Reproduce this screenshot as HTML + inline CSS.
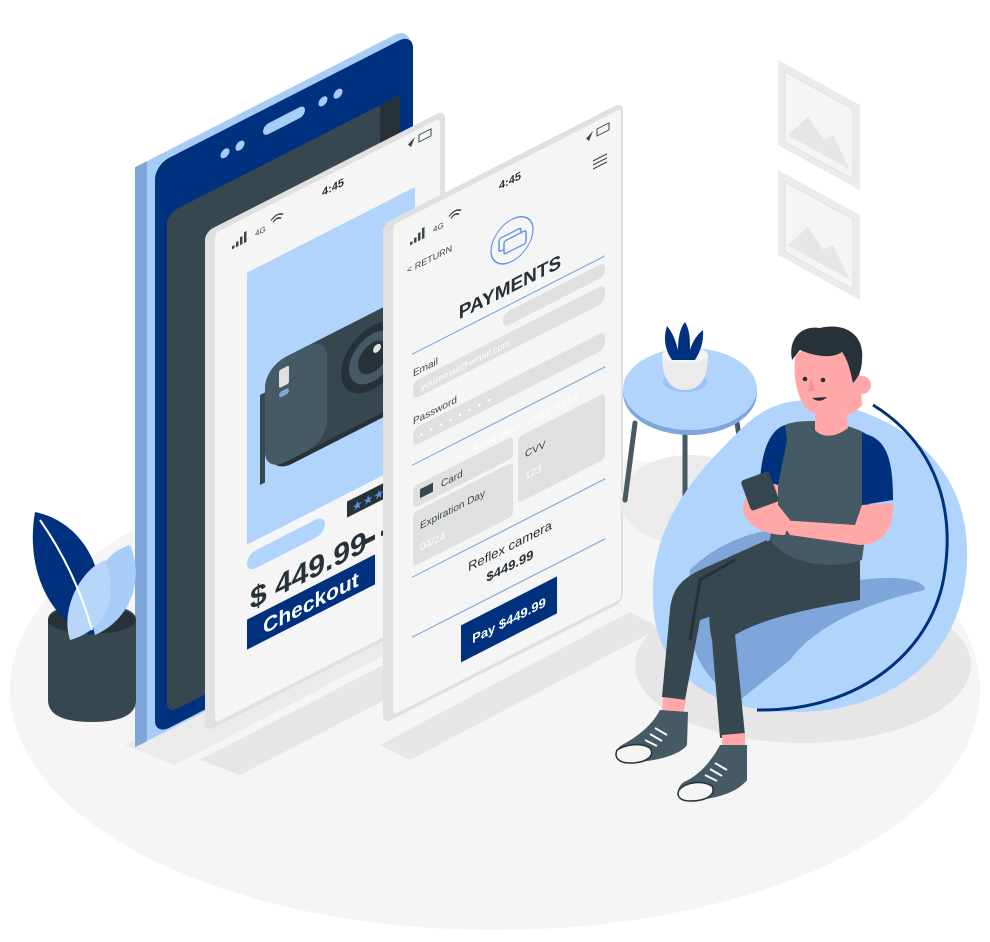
<!DOCTYPE html>
<html><head><meta charset="utf-8"><style>
html,body{margin:0;padding:0;background:#fff;}
svg{display:block;}
text{font-family:"Liberation Sans",sans-serif;}
</style></head><body>
<svg width="990" height="942" viewBox="0 0 990 942" xmlns="http://www.w3.org/2000/svg">
<ellipse cx="495" cy="690" rx="485" ry="240" fill="#f5f5f5"/>
<g transform="matrix(1,0.55,0,1,778,60)">
 <rect x="0" y="0" width="82" height="85" fill="#ebebeb"/>
 <rect x="7" y="8" width="68" height="70" fill="#f5f5f5" stroke="#e0e0e0"/>
 <path d="M10 70 L30 40 L45 55 L55 45 L72 70Z" fill="#e6e6e6"/>
 <rect x="0" y="110" width="82" height="85" fill="#ebebeb"/>
 <rect x="7" y="118" width="68" height="70" fill="#f5f5f5" stroke="#e0e0e0"/>
 <path d="M10 180 L30 150 L45 165 L55 155 L72 180Z" fill="#e6e6e6"/>
</g>
<polygon points="125,745 420,590 470,610 175,765" fill="#ebebeb"/>
<polygon points="200,760 460,625 500,640 240,775" fill="#e6e6e6"/>
<polygon points="380,745 630,612 660,628 410,760" fill="#e6e6e6"/>
<g transform="matrix(1,-0.51,0,1,155,165)">
 <rect x="-20" y="-8" width="275" height="580" rx="16" fill="#a8ccf8"/>
 <rect x="-20" y="-8" width="12" height="580" fill="#7fa6da"/>
 <rect x="0" y="0" width="258" height="570" rx="14" fill="#00317f"/>
 <rect x="12" y="55" width="233" height="500" rx="10" fill="#37474f"/>
 <rect x="225" y="55" width="20" height="500" fill="#263238"/>
 <rect x="108" y="16" width="42" height="11" rx="5.5" fill="#a8ccf8"/>
 <circle cx="70" cy="24" r="4.5" fill="#a8ccf8"/><circle cx="85" cy="24" r="4.5" fill="#a8ccf8"/>
 <circle cx="168" cy="22" r="4.5" fill="#a8ccf8"/><circle cx="183" cy="22" r="4.5" fill="#a8ccf8"/>
</g>
<path d="M48 620 Q48 605 92 605 Q136 605 136 620 L136 700 Q136 722 92 722 Q48 722 48 700Z" fill="#37474f"/>
<ellipse cx="92" cy="620" rx="44" ry="14" fill="#263238"/>
<path d="M90 635 C50 620 25 570 35 512 C75 520 110 560 100 630Z" fill="#00317f"/>
<path d="M95 635 C85 600 95 555 130 545 C145 580 130 620 95 635Z" fill="#a8ccf8"/>
<path d="M70 640 C60 610 80 570 105 560 C120 600 105 630 70 640Z" fill="#b8d6fa"/>
<path d="M40 520 Q75 570 92 630" stroke="#fff" stroke-width="2" fill="none"/>
<g transform="matrix(1,-0.51,0,1,215,233)">
 <rect x="-10" y="-6" width="240" height="500" rx="8" fill="#e0e0e0"/>
 <rect x="0" y="0" width="225" height="490" rx="4" fill="#f5f5f5"/>
 <text x="118" y="18" font-size="11" font-weight="bold" fill="#263238" text-anchor="middle">4:45</text>
 <rect x="17" y="22" width="2.5" height="3" fill="#37474f"/><rect x="21" y="20" width="2.5" height="5" fill="#37474f"/><rect x="25" y="17" width="2.5" height="8" fill="#37474f"/><rect x="29" y="14" width="2.5" height="11" fill="#37474f"/>
 <text x="40" y="24" font-size="8" fill="#37474f">4G</text>
 <path d="M56 16 Q62 11 68 16 M58 19 Q62 15 66 19" stroke="#37474f" stroke-width="1.5" fill="none"/>
 <path d="M193 10 L200 6 L196 14Z" fill="#37474f"/>
 <rect x="204" y="6" width="12" height="7" fill="none" stroke="#37474f"/>
 <rect x="32" y="56" width="168" height="272" fill="#b0d4fc"/>
 <rect x="55" y="170" width="150" height="100" rx="22" fill="#263238"/>
 <rect x="50" y="160" width="150" height="105" rx="22" fill="#37474f"/>
 <rect x="50" y="160" width="62" height="105" rx="20" fill="#455a64"/>
 <circle cx="158" cy="205" r="32" fill="#263238"/>
 <circle cx="158" cy="205" r="24" fill="#455a64"/>
 <circle cx="158" cy="205" r="15" fill="#263238"/>
 <circle cx="162" cy="198" r="4" fill="#e0e0e0"/>
 <rect x="64" y="170" width="10" height="18" rx="2" fill="#e0e0e0"/>
 <rect x="64" y="192" width="10" height="6" rx="3" fill="#7fa6da"/>
 <rect x="45" y="185" width="5" height="90" fill="#37474f"/>
 <rect x="32" y="338" width="78" height="18" rx="9" fill="#b0d4fc"/>
 <rect x="132" y="336" width="70" height="16" fill="#263238"/>
 <text x="137" y="349" font-size="12" fill="#5b8fe0">★★★</text>
 <text x="35" y="395" font-size="30" font-weight="bold" fill="#263238">$ 449.99</text>
 <rect x="150" y="383" width="10" height="5" fill="#263238"/><rect x="166" y="383" width="10" height="5" fill="#263238"/>
 <rect x="32" y="403" width="128" height="30" fill="#00317f"/>
 <text x="96" y="426" font-size="21" font-weight="bold" fill="#fff" text-anchor="middle">Checkout</text>
</g>
<g transform="matrix(1,-0.51,0,1,393,225)">
 <rect x="-10" y="-6" width="240" height="500" rx="8" fill="#e0e0e0"/>
 <rect x="0" y="0" width="228" height="490" rx="4" fill="#f5f5f5"/>
 <text x="117" y="19" font-size="11" font-weight="bold" fill="#263238" text-anchor="middle">4:45</text>
 <rect x="17" y="26" width="2.5" height="3" fill="#37474f"/><rect x="21" y="24" width="2.5" height="5" fill="#37474f"/><rect x="25" y="21" width="2.5" height="8" fill="#37474f"/><rect x="29" y="18" width="2.5" height="11" fill="#37474f"/>
 <text x="40" y="28" font-size="8" fill="#37474f">4G</text>
 <path d="M56 20 Q62 15 68 20 M58 23 Q62 19 66 23" stroke="#37474f" stroke-width="1.5" fill="none"/>
 <path d="M193 12 L200 8 L196 16Z" fill="#37474f"/>
 <rect x="204" y="8" width="12" height="7" fill="none" stroke="#37474f"/>
 <path d="M200 38 H214 M200 42 H214 M200 46 H214" stroke="#37474f" stroke-width="1.2"/>
 <text x="14" y="56" font-size="9" fill="#37474f">&lt; RETURN</text>
 <circle cx="119" cy="76" r="21" fill="none" stroke="#5b8fe0" stroke-width="1.2"/>
 <rect x="106" y="68" width="22" height="13" rx="2" fill="none" stroke="#5b8fe0" stroke-width="1.4"/>
 <rect x="111" y="73" width="22" height="13" rx="2" fill="#f5f5f5" stroke="#5b8fe0" stroke-width="1.4"/>
 <text x="117" y="128" font-size="19" font-weight="bold" fill="#263238" text-anchor="middle">PAYMENTS</text>
 <line x1="19" y1="139" x2="212" y2="139" stroke="#7fa6da" stroke-width="1.2"/>
 <rect x="110" y="145" width="102" height="14" rx="6" fill="#e0e0e0"/>
 <text x="20" y="162" font-size="10" fill="#37474f">Email</text>
 <rect x="20" y="167" width="192" height="18" rx="6" fill="#e0e0e0"/>
 <text x="28" y="180" font-size="9" fill="#fff">youremail@email.com</text>
 <text x="20" y="210" font-size="10" fill="#37474f">Password</text>
 <rect x="20" y="214" width="192" height="18" rx="6" fill="#e0e0e0"/>
 <text x="27" y="227" font-size="9" fill="#fff" letter-spacing="2">• • • • • • • •</text>
 <line x1="19" y1="250" x2="212" y2="250" stroke="#7fa6da" stroke-width="1.2"/>
 <text x="80" y="268" font-size="9" fill="#fff" letter-spacing="1">4444 0000 8888 6666</text>
 <rect x="20" y="272" width="100" height="22" rx="4" fill="#e0e0e0"/>
 <rect x="27" y="278" width="13" height="9" fill="#37474f"/>
 <text x="48" y="287" font-size="10" fill="#37474f">Card</text>
 <rect x="20" y="298" width="100" height="54" rx="4" fill="#e0e0e0"/>
 <text x="27" y="318" font-size="10" fill="#37474f">Expiration Day</text>
 <text x="27" y="340" font-size="10" fill="#fff">04/24</text>
 <rect x="125" y="276" width="87" height="66" rx="4" fill="#e0e0e0"/>
 <text x="132" y="300" font-size="10" fill="#37474f">CVV</text>
 <text x="132" y="322" font-size="10" fill="#fff">123</text>
 <line x1="19" y1="362" x2="212" y2="362" stroke="#7fa6da" stroke-width="1.2"/>
 <text x="117" y="385" font-size="13" fill="#263238" text-anchor="middle">Reflex camera</text>
 <text x="117" y="405" font-size="13" font-weight="bold" fill="#263238" text-anchor="middle">$449.99</text>
 <line x1="19" y1="422" x2="212" y2="422" stroke="#7fa6da" stroke-width="1.2"/>
 <rect x="68" y="435" width="96" height="37" fill="#00317f"/>
 <text x="116" y="459" font-size="13" font-weight="bold" fill="#fff" text-anchor="middle">Pay $449.99</text>
</g>
<ellipse cx="690" cy="500" rx="70" ry="45" fill="#ebebeb"/>
<path d="M635 423 L625 500 M685 433 L685 523 M737 423 L743 460" stroke="#455a64" stroke-width="5" stroke-linecap="round"/>
<ellipse cx="690" cy="393" rx="67" ry="42" fill="#7fa6da"/>
<ellipse cx="690" cy="389" rx="67" ry="41" fill="#b0d4fc"/>
<ellipse cx="685" cy="382" rx="22" ry="10" fill="#9cc3f5"/>
<path d="M662 355 Q662 390 685 390 Q708 390 708 355Z" fill="#ebebeb"/>
<ellipse cx="685" cy="355" rx="23" ry="8" fill="#f5f5f5"/>
<path d="M672 360 C662 345 665 333 667 326 C673 333 676 342 678 350 C678 338 680 328 685 322 C690 330 690 340 690 350 C693 340 698 334 703 330 C704 342 700 352 695 360Z" fill="#00317f"/>
<ellipse cx="803" cy="665" rx="168" ry="78" fill="#e6e6e6"/>
<path d="M653 600 C650 520 700 470 740 430 C770 400 800 395 840 405 C920 425 970 480 967 560 C965 650 900 710 800 712 C720 713 655 680 653 600Z" fill="#b0d4fc"/>
<path d="M690 570 C720 540 770 520 830 530 L860 580 C900 575 925 580 925 590 C880 600 820 620 790 660 L740 700 C700 680 680 640 690 570Z" fill="#7fa6da"/>
<path d="M873 405 C930 440 955 500 945 570 C935 650 860 712 757 710" stroke="#00317f" stroke-width="3" fill="none"/>
<path d="M767 540 L700 570 C680 580 672 590 670 610 L662 697 L685 700 L700 620 L760 600Z" fill="#37474f"/>
<path d="M730 560 L770 540 L860 560 L860 600 C800 610 760 620 735 635 L745 735 L720 738 L712 640 C705 610 712 585 730 560Z" fill="#37474f"/>
<path d="M735 560 L700 580 L690 640" stroke="#263238" stroke-width="3" fill="none"/>
<path d="M663 697 L686 700 L683 715 L662 712Z" fill="#ffa8a7"/>
<path d="M722 735 L745 733 L745 750 L722 750Z" fill="#ffa8a7"/>
<path d="M660 710 L688 712 L687 745 C680 755 655 762 630 762 C615 762 613 750 622 745 C640 735 652 725 660 710Z" fill="#455a64"/>
<path d="M617 750 C625 745 640 742 650 748 C655 755 648 763 630 763 C618 763 614 757 617 750Z" fill="#f5f5f5" stroke="#263238" stroke-width="1.5"/>
<path d="M720 745 L747 745 L747 780 C738 792 715 800 690 800 C676 800 675 788 684 782 C700 775 712 760 720 745Z" fill="#455a64"/>
<path d="M679 790 C686 782 702 780 712 786 C716 794 708 801 690 801 C680 801 676 796 679 790Z" fill="#f5f5f5" stroke="#263238" stroke-width="1.5"/>
<path d="M655 728 L667 735 M650 734 L662 741 M645 740 L657 746 M715 763 L727 770 M710 769 L722 776 M705 775 L717 781" stroke="#f5f5f5" stroke-width="2"/>
<path d="M785 425 C800 418 840 420 865 433 L870 500 L862 560 C830 570 790 565 770 540 L778 470Z" fill="#455a64"/>
<path d="M785 425 C770 430 762 450 760 480 L778 485 L787 440Z" fill="#00317f"/>
<path d="M862 433 C885 438 893 455 893 500 L862 505 Z" fill="#00317f"/>
<path d="M862 505 L893 503 C895 530 880 545 860 545 L790 535 L780 520 L855 525Z" fill="#ffa8a7"/>
<path d="M760 480 L778 485 L778 505 L790 520 L785 535 C765 535 745 525 743 510 C742 500 752 490 760 480Z" fill="#ffa8a7"/>
<rect x="745" y="475" width="30" height="32" rx="3" transform="rotate(-20 760 491)" fill="#37474f"/>
<path d="M815 405 L845 400 L848 428 C835 438 822 438 815 430Z" fill="#ffa8a7"/>
<path d="M795 360 C795 340 860 345 860 375 L862 405 C850 420 825 420 808 410 C798 400 793 380 795 360Z" fill="#ffa8a7"/>
<circle cx="862" cy="385" r="9" fill="#ffa8a7"/>
<path d="M792 360 C788 340 800 325 820 328 C845 322 865 335 862 360 C862 370 858 378 853 383 C850 370 848 360 842 352 C830 360 812 355 800 350 Z" fill="#263238"/>
<circle cx="805" cy="379" r="2.3" fill="#263238"/><circle cx="823" cy="380" r="2.3" fill="#263238"/>
<path d="M811 378 L808 392 L815 390Z" fill="#f28f8f"/>
<path d="M812 398 Q820 404 827 397 Z" fill="#263238"/>
</svg>
</body></html>
